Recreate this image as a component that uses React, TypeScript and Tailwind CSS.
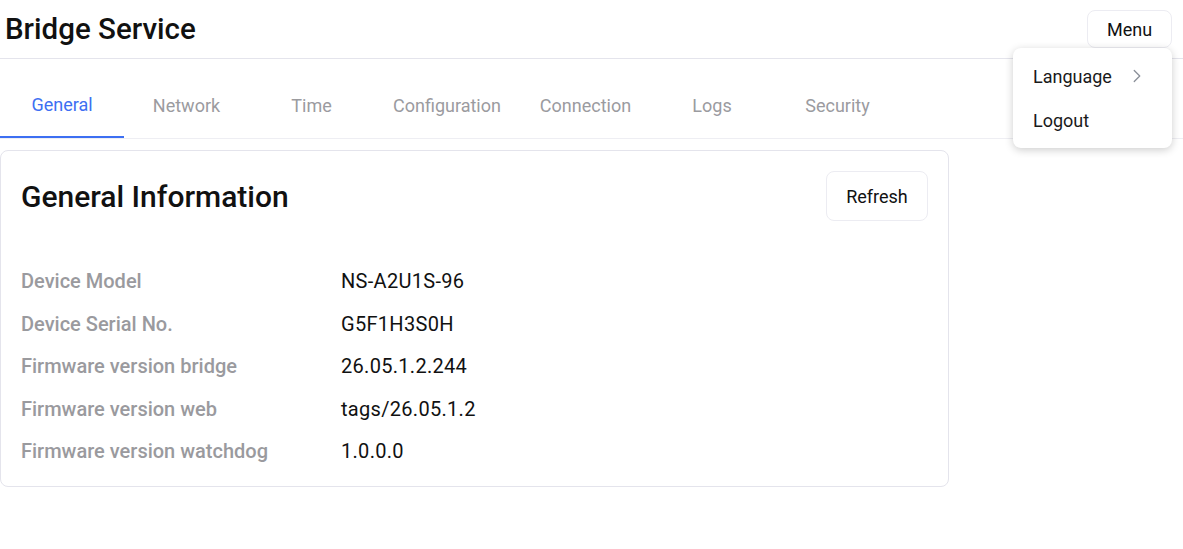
import React from "react";
import { ChevronRight } from "lucide-react";

const tabs = [
  { name: "General", width: "w-[124px]" },
  { name: "Network", width: "w-[125px]" },
  { name: "Time", width: "w-[125px]" },
  { name: "Configuration", width: "w-[146px]" },
  { name: "Connection", width: "w-[131px]" },
  { name: "Logs", width: "w-[122px]" },
  { name: "Security", width: "w-[129px]" },
];

const info = [
  { label: "Device Model", value: "NS-A2U1S-96" },
  { label: "Device Serial No.", value: "G5F1H3S0H" },
  { label: "Firmware version bridge", value: "26.05.1.2.244" },
  { label: "Firmware version web", value: "tags/26.05.1.2" },
  { label: "Firmware version watchdog", value: "1.0.0.0" },
];

function MenuDropdown() {
  return (
    <div className="absolute right-[11px] top-[48px] z-10 w-[159px] rounded-lg bg-white py-[6px] shadow-[0_2px_8px_rgba(0,0,0,0.2)]">
      <div className="flex h-[44px] items-center justify-between pl-5 pr-[24px] text-[18px] text-[#1a1a1a]">
        <span>Language</span>
        <ChevronRight className="h-[22px] w-[22px] text-[#8a8f98]" strokeWidth={1.4} />
      </div>
      <div className="flex h-[44px] items-center pl-5 text-[18px] text-[#1a1a1a]">
        Logout
      </div>
    </div>
  );
}

export default function App() {
  return (
    <div className="relative min-h-[549px] bg-white font-['Roboto',sans-serif]">
      <header className="flex h-[59px] items-center justify-between border-b border-[#e4e4ec] pl-[5px] pr-[11px]">
        <h1 className="text-[29.5px] font-medium text-[#111]">Bridge Service</h1>
        <button className="h-[38px] w-[85px] rounded-lg border border-[#ececf2] text-[18px] text-[#111]">
          Menu
        </button>
      </header>
      <MenuDropdown />

      <nav className="flex h-[80px] border-b border-[#eeeef3]">
        {tabs.map((tab, i) => (
          <div
            key={tab.name}
            className={`${tab.width} flex items-center justify-center pt-[14px] text-[18px] ${
              i === 0
                ? "border-b-2 border-[#3d6ff2] text-[#3d6ff2]"
                : "text-[#9b9b9f]"
            }`}
          >
            {tab.name}
          </div>
        ))}
      </nav>

      <section className="mt-[11px] w-[949px] rounded-lg border border-[#e4e4ec] px-5 pb-[13px] pt-5">
        <div className="flex items-center justify-between">
          <h2 className="text-[30px] font-medium text-[#111]">General Information</h2>
          <button className="h-[50px] w-[102px] rounded-lg border border-[#ececf2] text-[18px] text-[#111]">
            Refresh
          </button>
        </div>
        <div className="mt-[39px] flex flex-col">
          {info.map((row) => (
            <div key={row.label} className="flex h-[42.5px] items-center text-[20px]">
              <span className="w-[320px] font-medium text-[#9a9a9e]">{row.label}</span>
              <span className="tracking-[0.3px] text-[#111]">{row.value}</span>
            </div>
          ))}
        </div>
      </section>
    </div>
  );
}
